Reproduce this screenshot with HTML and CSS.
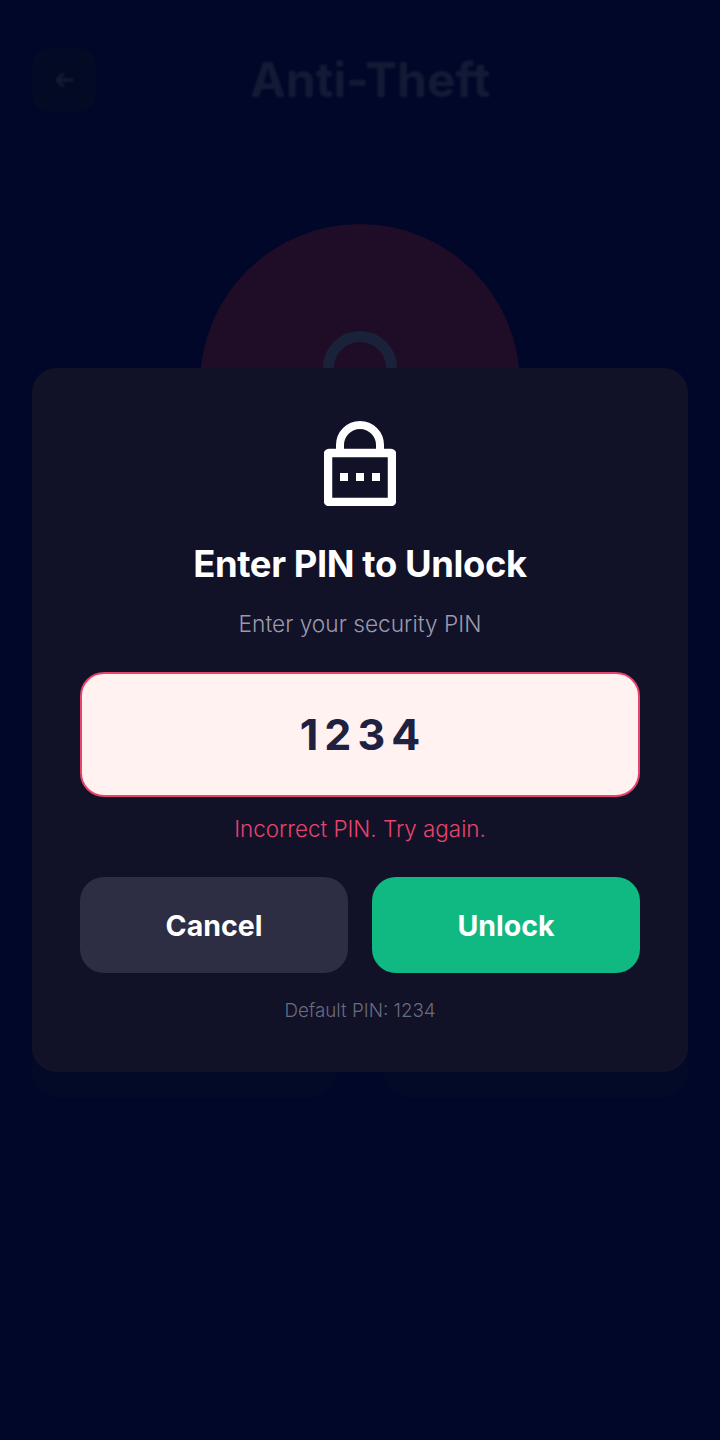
FILE: index.html
```html
<!DOCTYPE html>
<html lang="en">
  <head>
    <meta charset="UTF-8" />
    <meta name="viewport" content="width=device-width, initial-scale=1.0" />
    <title>Anti-Theft</title>
    <link rel="stylesheet" href="styles.css">
  </head>
  <body>
    <div class="screen">
      <div class="screen__header">
        <button class="button--back">
          <svg width="24" height="24" viewBox="0 0 24 24" fill="none" stroke="#141b33" stroke-width="3" stroke-linecap="round" stroke-linejoin="round">
            <path d="M20 12H5M11 6l-6 6 6 6" />
          </svg>
        </button>
        <h1>Anti-Theft</h1>
      </div>
      <div class="status__circle">
        <svg width="74" height="40" viewBox="0 0 74 40" fill="none" stroke="#1a2239" stroke-width="11">
          <path d="M5.5 40V37a31.5 31.5 0 0 1 63 0V40" />
        </svg>
      </div>
      <div class="screen__cards">
        <div class="card"></div>
        <div class="card"></div>
      </div>
    </div>

    <div class="overlay">
      <div class="modal">
        <svg class="modal__icon" width="72" height="85" viewBox="0 0 72 85" fill="none">
          <path d="M16 32V24a20 20 0 0 1 40 0v8" stroke="#fff" stroke-width="8" />
          <rect x="4" y="32" width="64" height="49" rx="1" stroke="#fff" stroke-width="8.5" />
          <rect x="16" y="52" width="8" height="8" fill="#fff" />
          <rect x="32" y="52" width="8" height="8" fill="#fff" />
          <rect x="48" y="52" width="8" height="8" fill="#fff" />
        </svg>
        <h2 class="modal__title">Enter PIN to Unlock</h2>
        <p class="modal__subtitle">Enter your security PIN</p>
        <div class="pin__input">1234</div>
        <p class="pin__error">Incorrect PIN. Try again.</p>
        <div class="modal__actions">
          <button class="button button--cancel">Cancel</button>
          <button class="button button--unlock">Unlock</button>
        </div>
        <p class="modal__hint">Default PIN: 1234</p>
      </div>
    </div>
  </body>
</html>
```

FILE: styles.css
```css
* {
  box-sizing: border-box;
  margin: 0;
  padding: 0;
}
html,
body {
  width: 720px;
  height: 1440px;
  overflow: hidden;
  background-color: #000728;
  font-family: "Inter", "Liberation Sans", sans-serif;
}
button {
  border: none;
  font-family: inherit;
}

/* dimmed page behind the dialog */
.screen {
  display: flex;
  flex-direction: column;
  align-items: center;
  height: 100%;
  padding: 48px 32px 0;
}
.screen__header {
  display: flex;
  align-items: center;
  width: 100%;
  height: 64px;
}
.button--back {
  display: flex;
  align-items: center;
  justify-content: center;
  width: 64px;
  height: 64px;
  border-radius: 16px;
  background-color: #030a24;
  filter: blur(1px);
}
.screen__header h1 {
  margin-left: 154px;
  font-size: 48px;
  font-weight: 700;
  line-height: 64px;
  color: #141a36;
  filter: blur(0.8px);
}
.status__circle {
  display: flex;
  justify-content: center;
  flex-shrink: 0;
  width: 320px;
  height: 320px;
  margin-top: 112px;
  padding-top: 107px;
  border-radius: 50%;
  background-color: #1f0c27;
}
.status__circle svg {
  display: block;
}
.screen__cards {
  display: flex;
  gap: 48px;
  width: 100%;
  margin-top: 100px;
}
.card {
  flex: 1;
  height: 454px;
  border-radius: 24px;
  background-color: #020a28;
}

/* dialog */
.overlay {
  position: absolute;
  top: 0;
  left: 0;
  width: 100%;
  height: 100%;
  display: flex;
  align-items: center;
  justify-content: center;
}
.modal {
  display: flex;
  flex-direction: column;
  align-items: center;
  width: 656px;
  height: 704px;
  padding: 53px 48px 0;
  border-radius: 24px;
  background-color: #111128;
}
.modal__icon {
  display: block;
  flex-shrink: 0;
}
.modal__title {
  margin-top: 34px;
  font-size: 36.4px;
  font-weight: 700;
  line-height: 48px;
  letter-spacing: -0.4px;
  color: #ffffff;
}
.modal__subtitle {
  margin-top: 21px;
  font-size: 22.7px;
  font-weight: 300;
  line-height: 30px;
  color: #9a9aad;
}
.pin__input {
  width: 100%;
  height: 125px;
  margin-top: 33px;
  padding-left: 6px;
  border: 2px solid #e8436c;
  border-radius: 24px;
  background-color: #fff2f1;
  font-size: 43px;
  font-weight: 700;
  line-height: 121px;
  letter-spacing: 6px;
  text-align: center;
  color: #1e2140;
}
.pin__error {
  margin-top: 17px;
  font-size: 22.4px;
  font-weight: 300;
  line-height: 30px;
  color: #e8436c;
}
.modal__actions {
  display: flex;
  gap: 24px;
  width: 100%;
  margin-top: 33px;
}
.button {
  flex: 1;
  height: 96px;
  border-radius: 24px;
  font-size: 28.5px;
  font-weight: 700;
  color: #ffffff;
}
.button--cancel {
  background-color: #2d2d44;
}
.button--unlock {
  background-color: #10b981;
}
.modal__hint {
  margin-top: 24px;
  font-size: 18.8px;
  font-weight: 300;
  line-height: 28px;
  color: #6b6b7f;
}
```
